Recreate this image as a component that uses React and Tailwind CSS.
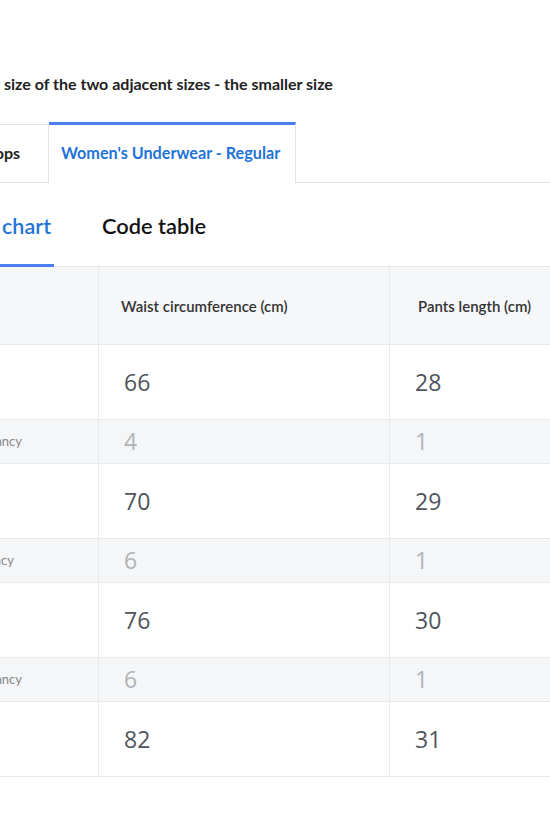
import React from "react";

const rows = [
  { waist: "66", length: "28" },
  { waist: "4", length: "1", tol: "Discrepancy", end: "w-[22px]" },
  { waist: "70", length: "29" },
  { waist: "6", length: "1", tol: "Discrepancy", end: "w-[14px]" },
  { waist: "76", length: "30" },
  { waist: "6", length: "1", tol: "Discrepancy", end: "w-[22px]" },
  { waist: "82", length: "31" },
];

const App = () => {
  return (
    <div className="w-[550px] h-[825px] bg-white overflow-hidden font-['Lato','Open_Sans',sans-serif]">
      {/* note line, cut off on the left */}
      <div className="pt-[73px] h-[94px] flex text-[16px] leading-[22px] font-bold text-[#222] whitespace-nowrap">
        <div className="w-0 flex justify-end">
          <span>If the measurement is between two sizes, choose the larger</span>
        </div>
        <p className="pl-[4px]">size of the two adjacent sizes - the smaller size</p>
      </div>

      {/* category tabs */}
      <div className="mt-[28px] flex items-end">
        <div className="w-[49px] h-[59px] flex justify-end items-center border-t border-r border-b border-[#e3e3e3] pr-[28px] pb-[2px]">
          <span className="whitespace-nowrap text-[16px] font-bold text-[#222]">Tops</span>
        </div>
        <div className="w-[247px] h-[61px] flex items-center pl-[12px] pb-[1px] border-t-[3px] border-t-[#4b7ef0] border-r border-r-[#e3e3e3] bg-white">
          <span className="whitespace-nowrap text-[16.2px] font-bold text-[#1f74d8]">Women's Underwear - Regular</span>
        </div>
        <div className="flex-1 h-[61px] border-b border-[#e6e6e6]"></div>
      </div>

      {/* sub tabs */}
      <div className="flex items-end h-[84px] border-b border-[#e6e6e6]">
        <div className="w-[54px] h-full flex justify-end items-center pr-[3px] pt-[4px] border-b-[3px] border-[#4b7ef0] -mb-px">
          <span className="whitespace-nowrap text-[21.5px] font-semibold text-[#1f74d8]">Size chart</span>
        </div>
        <div className="h-full flex items-center pl-[48px] pt-[4px]">
          <span className="whitespace-nowrap text-[21.8px] font-semibold text-[#111]">Code table</span>
        </div>
      </div>

      {/* size table */}
      <div className="grid grid-cols-[99px_291px_1fr] text-[#333]">
        <div className="h-[78px] bg-[#f6f7f9] border-r border-b border-[#e8e9eb]"></div>
        <div className="h-[78px] bg-[#f6f7f9] border-r border-b border-[#e8e9eb] flex items-center pl-[22px] pt-[2px]">
          <span className="whitespace-nowrap text-[15px] font-semibold text-[#333]">Waist circumference (cm)</span>
        </div>
        <div className="h-[78px] bg-[#f6f7f9] border-b border-[#e8e9eb] flex items-center pl-[28px] pt-[2px]">
          <span className="whitespace-nowrap text-[15px] font-semibold text-[#333]">Pants length (cm)</span>
        </div>

        {rows.map((r, i) =>
          r.tol ? (
            <React.Fragment key={i}>
              <div className="h-[44px] bg-[#f4f6f8] border-r border-b border-[#e8e9eb] flex items-center">
                <div className={`${r.end} flex justify-end`}>
                  <span className="whitespace-nowrap text-[13px] text-[#888]">{r.tol}</span>
                </div>
              </div>
              <div className="h-[44px] bg-[#f4f6f8] border-r border-b border-[#e8e9eb] flex items-center pl-[25px] font-['Open_Sans',sans-serif] text-[23px] text-[#b0b3b7]">
                {r.waist}
              </div>
              <div className="h-[44px] bg-[#f4f6f8] border-b border-[#e8e9eb] flex items-center pl-[25px] font-['Open_Sans',sans-serif] text-[23px] text-[#b0b3b7]">
                {r.length}
              </div>
            </React.Fragment>
          ) : (
            <React.Fragment key={i}>
              <div className="h-[75px] border-r border-b border-[#e8e9eb]"></div>
              <div className="h-[75px] border-r border-b border-[#e8e9eb] flex items-center pl-[25px] font-['Open_Sans',sans-serif] text-[23px] text-[#4f555b]">
                {r.waist}
              </div>
              <div className="h-[75px] border-b border-[#e8e9eb] flex items-center pl-[25px] font-['Open_Sans',sans-serif] text-[23px] text-[#4f555b]">
                {r.length}
              </div>
            </React.Fragment>
          )
        )}
      </div>
    </div>
  );
};

export default App;
